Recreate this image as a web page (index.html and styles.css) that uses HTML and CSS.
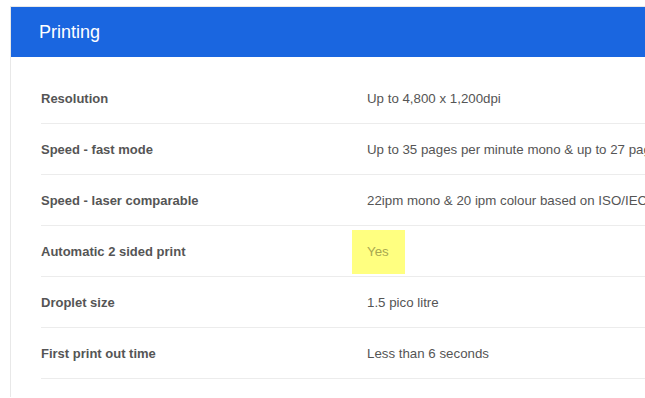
FILE: index.html
```html
<!DOCTYPE html>
<html>
<head>
<meta charset="utf-8">
<link rel="stylesheet" href="styles.css">
</head>
<body>
<section class="card">
  <header class="card-head">Printing</header>
  <div class="card-body">
    <div class="row"><div class="label">Resolution</div><div class="value">Up to 4,800 x 1,200dpi</div></div>
    <div class="row"><div class="label">Speed - fast mode</div><div class="value">Up to 35 pages per minute mono &amp; up to 27 pages per minute colour</div></div>
    <div class="row"><div class="label">Speed - laser comparable</div><div class="value">22ipm mono &amp; 20 ipm colour based on ISO/IEC 24734</div></div>
    <div class="row"><div class="label">Automatic 2 sided print</div><div class="value"><span class="hl">Yes</span></div></div>
    <div class="row"><div class="label">Droplet size</div><div class="value">1.5 pico litre</div></div>
    <div class="row"><div class="label">First print out time</div><div class="value">Less than 6 seconds</div></div>
  </div>
</section>
</body>
</html>
```
FILE: styles.css
```css
html, body {
  margin: 0;
  padding: 0;
  background: #fff;
  overflow: hidden;
}
body {
  padding: 6px 0 0 10px;
  font-family: "Liberation Sans", Arial, sans-serif;
}
.card {
  width: 635px;
  border-left: 1px solid #e8e8e8;
  border-top: 1px solid #e8e8e8;
  background: #fff;
  overflow: hidden;
}
.card-head {
  background: #1a66e0;
  color: #fff;
  height: 50px;
  line-height: 50px;
  padding-left: 29px;
  font-size: 18px;
  margin: 0 0 0 -1px;
}
.card-body {
  padding: 16px 0 18px 30px;
}
.row {
  display: flex;
  align-items: center;
  height: 50px;
  border-bottom: 1px solid #ececec;
  white-space: nowrap;
}
.label {
  flex: 0 0 326px;
  font-size: 13px;
  font-weight: bold;
  color: #555;
}
.value {
  font-size: 13.3px;
  color: #555;
}
.hl {
  display: inline-block;
  background: #ffff80;
  color: #a8a850;
  margin-left: -15px;
  padding: 0 16px 0 15px;
  height: 44px;
  line-height: 44px;
  margin-top: 1px;
}
```
